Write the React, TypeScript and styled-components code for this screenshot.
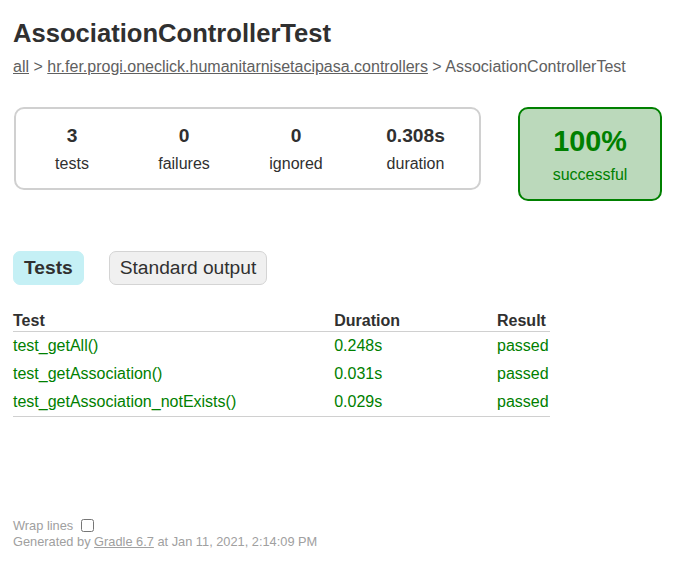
import React from "react";
import styled, { createGlobalStyle } from "styled-components";

const Global = createGlobalStyle`
  html, body { margin: 0; padding: 0; background: #ffffff; }
  body {
    font-family: "Liberation Sans", Arial, sans-serif;
    font-size: 16px;
    color: #303030;
  }
`;

const Content = styled.div`
  padding: 18px 13px 0 13px;
`;

const Title = styled.h1`
  font-size: 25.6px;
  line-height: 30px;
  font-weight: bold;
  margin: 0 0 10px 0;
  white-space: nowrap;
`;

const Breadcrumbs = styled.div`
  color: #606060;
  line-height: 18px;
  white-space: nowrap;
  a { color: #606060; text-decoration: underline; }
`;

const Summary = styled.div`
  margin-top: 30px;
  margin-bottom: 40px;
  display: flex;
  align-items: flex-start;
  padding: 1px;
`;

const SummaryGroup = styled.div`
  display: flex;
  border: solid 2px #d0d0d0;
  border-radius: 10px;
  padding: 0 1px;
  gap: 2px;
`;

const InfoBox = styled.div<{ $w?: number }>`
  width: ${(p) => p.$w ?? 110}px;
  padding: 16px 0 15px 0;
  text-align: center;
`;

const Counter = styled.div`
  font-size: 19.2px;
  line-height: 22px;
  font-weight: bold;
  margin-bottom: 8px;
`;

const Label = styled.p`
  margin: 0;
  line-height: 18px;
`;

const SuccessRate = styled.div`
  width: 140px;
  margin-left: 37px;
  border: solid 2px #008000;
  border-radius: 10px;
  background-color: #bbd9bb;
  color: #008000;
  text-align: center;
  padding: 15px 0 15px 0;
`;

const Percent = styled.div`
  font-size: 28.8px;
  line-height: 34px;
  font-weight: bold;
  margin-bottom: 8px;
`;

const TabLinks = styled.ul`
  list-style: none;
  margin: 0 0 16px 0;
  padding: 9px 0 10px 0;
  display: flex;
`;

const Tab = styled.li<{ $selected?: boolean }>`
  padding: 5px 10px;
  margin-right: 25px;
  border-radius: 7px;
  border: solid 1px ${(p) => (p.$selected ? "#c5f0f5" : "#d4d4d4")};
  background-color: ${(p) => (p.$selected ? "#c5f0f5" : "#f0f0f0")};
  font-size: 19.2px;
  line-height: 22px;
  font-weight: ${(p) => (p.$selected ? "bold" : "normal")};
  color: #303030;
  white-space: nowrap;
`;

const Table = styled.table`
  border-collapse: collapse;
  border-bottom: solid #d0d0d0 1px;
  min-width: 350px;
`;

const Th = styled.th`
  text-align: left;
  white-space: nowrap;
  padding: 1px 1px 1px 96px;
  line-height: 18px;
  border-bottom: solid #d0d0d0 1px;
  &:first-child { padding-left: 0; padding-right: 2px; }
`;

const Td = styled.td`
  white-space: nowrap;
  padding: 5px 1px 5px 96px;
  line-height: 18px;
  color: #008000;
  &:first-child { padding-left: 0; padding-right: 2px; }
`;

const Footer = styled.div`
  margin-top: 100px;
  font-size: 12.8px;
  line-height: 15px;
  color: #a0a0a0;
  white-space: nowrap;
  a { color: #a0a0a0; text-decoration: underline; }
`;

const WrapLabel = styled.label`
  display: flex;
  align-items: center;
  height: 17px;
`;

const Check = styled.input`
  margin: 0 0 0 8px;
  width: 13px;
  height: 13px;
`;

const tests = [
  { name: "test_getAll()", duration: "0.248s", result: "passed" },
  { name: "test_getAssociation()", duration: "0.031s", result: "passed" },
  { name: "test_getAssociation_notExists()", duration: "0.029s", result: "passed" },
];

const counters = [
  { value: "3", label: "tests", w: 110 },
  { value: "0", label: "failures", w: 110 },
  { value: "0", label: "ignored", w: 110 },
  { value: "0.308s", label: "duration", w: 125 },
];

export default function App() {
  return (
    <>
      <Global />
      <Content>
        <Title>AssociationControllerTest</Title>
        <Breadcrumbs>
          <a href="#">all</a> &gt;{" "}
          <a href="#">hr.fer.progi.oneclick.humanitarnisetacipasa.controllers</a> &gt; AssociationControllerTest
        </Breadcrumbs>
        <Summary>
          <SummaryGroup>
            {counters.map((c) => (
              <InfoBox key={c.label} $w={c.w}>
                <Counter>{c.value}</Counter>
                <Label>{c.label}</Label>
              </InfoBox>
            ))}
          </SummaryGroup>
          <SuccessRate>
            <Percent>100%</Percent>
            <Label>successful</Label>
          </SuccessRate>
        </Summary>
        <TabLinks>
          <Tab $selected>Tests</Tab>
          <Tab>Standard output</Tab>
        </TabLinks>
        <Table>
          <thead>
            <tr>
              <Th>Test</Th>
              <Th>Duration</Th>
              <Th>Result</Th>
            </tr>
          </thead>
          <tbody>
            {tests.map((t) => (
              <tr key={t.name}>
                <Td>{t.name}</Td>
                <Td>{t.duration}</Td>
                <Td>{t.result}</Td>
              </tr>
            ))}
          </tbody>
        </Table>
        <Footer>
          <WrapLabel>
            Wrap lines
            <Check type="checkbox" autoComplete="off" />
          </WrapLabel>
          <div>
            Generated by <a href="#">Gradle 6.7</a> at Jan 11, 2021, 2:14:09 PM
          </div>
        </Footer>
      </Content>
    </>
  );
}
